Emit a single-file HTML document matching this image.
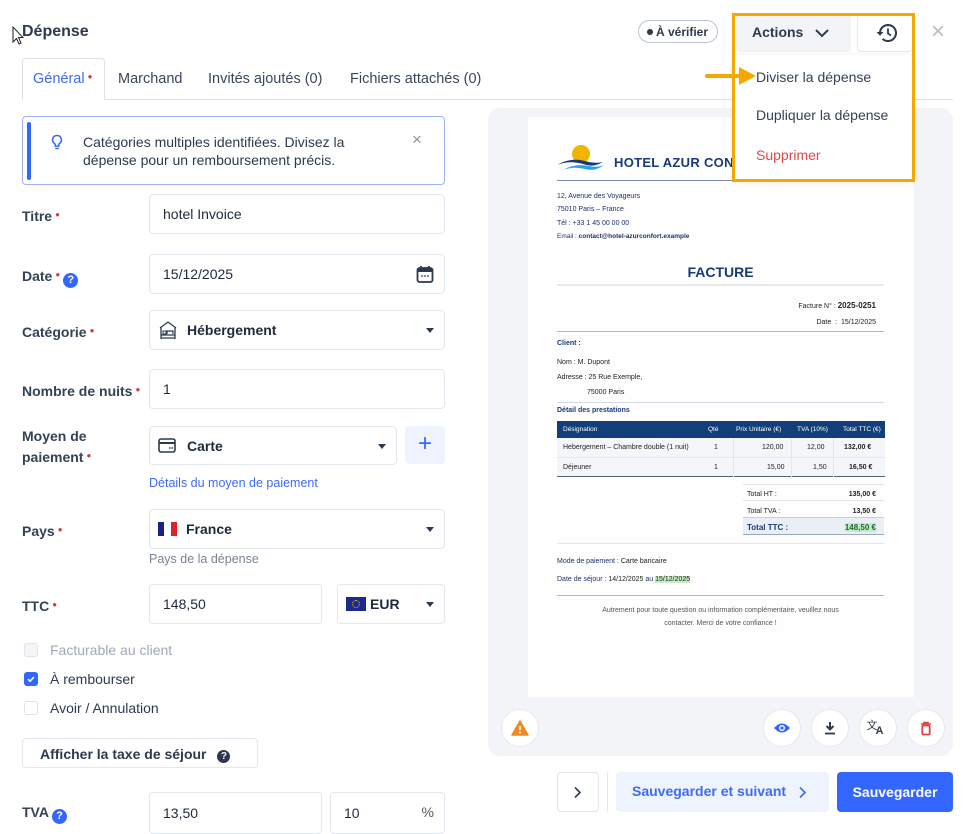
<!DOCTYPE html>
<html><head><meta charset="utf-8"><style>
*{box-sizing:border-box;margin:0;padding:0}
body{width:969px;height:831px;overflow:hidden;background:#fff;font-family:"Liberation Sans",sans-serif;color:#2d3a4e;position:relative}
.a{position:absolute}
.lbl{position:absolute;left:22px;font-size:14px;font-weight:bold;color:#344256;line-height:17px}
.req{color:#d63b3b;font-size:8px;vertical-align:4px;margin-left:3px}
.q{display:inline-block;width:15px;height:15px;border-radius:50%;background:#3366ff;color:#fff;font-size:11px;text-align:center;line-height:15px;margin-left:3px;vertical-align:-2px}
.inp{position:absolute;border:1px solid #e2e6ee;border-radius:4px;background:#fff;font-size:14px;color:#1e293b;padding-left:13px;display:flex;align-items:center}
.caret{position:absolute;right:10px;top:50%;margin-top:-2px;width:0;height:0;border-left:4px solid transparent;border-right:4px solid transparent;border-top:5px solid #2d3a4e}
.doc{font-family:"Liberation Sans",sans-serif;color:#222}
.d8{font-size:7px}
.hl{position:absolute;left:557px;width:327px;height:1px;background:#c9d0dc}
.circ{position:absolute;width:38px;height:38px;border-radius:50%;background:#fff;border:1px solid #e6e9f0;display:flex;align-items:center;justify-content:center}
.cb{position:absolute;left:24px;width:14px;height:14px;border:1px solid #dfe3ea;border-radius:3px;background:#fff}
.cbt{position:absolute;left:50px;font-size:14px}
.tab{position:absolute;top:71px;font-size:14.5px;color:#3a4658}
</style></head><body>

<svg class="a" style="left:12px;top:26px" width="12" height="20" viewBox="0 0 12 20"><path d="M1 1 L1 16 L4.5 12.5 L7 18 L9 17 L6.5 11.5 L11 11.5 Z" fill="#fff" stroke="#222" stroke-width="1"/></svg>
<div class="a" style="left:22px;top:23px;font-size:16px;font-weight:bold;color:#2d3a4e">Dépense</div>

<div class="a" style="left:22px;top:99px;width:931px;height:1px;background:#dde1e8"></div>
<div class="a" style="left:22px;top:58px;width:83px;height:42px;border:1px solid #dde1e8;border-bottom:none;border-radius:4px 4px 0 0;background:#fff"></div>
<div class="tab" style="left:33px;color:#3d6bf5">Général<span class="req">●</span></div>
<div class="tab" style="left:118px">Marchand</div>
<div class="tab" style="left:208px">Invités ajoutés (0)</div>
<div class="tab" style="left:350px">Fichiers attachés (0)</div>

<div class="a" style="left:22px;top:116px;width:423px;height:69px;border:1px solid #9db2f5;border-radius:4px"></div>
<div class="a" style="left:27px;top:122px;width:4px;height:58px;background:#3366ff;border-radius:2px"></div>
<svg class="a" style="left:51px;top:134px" width="12" height="17" viewBox="0 0 12 17"><path d="M6 1.5a4.3 4.3 0 0 0-2.6 7.8c.6.5.9 1.1.9 1.8v1h3.4v-1c0-.7.3-1.3.9-1.8A4.3 4.3 0 0 0 6 1.5z" fill="none" stroke="#3366ff" stroke-width="1.5"/><path d="M4.3 14.5h3.4" stroke="#3366ff" stroke-width="1.5"/></svg>
<div class="a" style="left:83px;top:133px;font-size:14px;line-height:18px;color:#2d3a4e">Catégories multiples identifiées. Divisez la<br>dépense pour un remboursement précis.</div>
<div class="a" style="left:412px;top:130px;font-size:17px;color:#8a93a3">×</div>

<div class="lbl" style="top:206px">Titre<span class="req">●</span></div>
<div class="inp" style="left:149px;top:194px;width:296px;height:40px">hotel Invoice</div>

<div class="lbl" style="top:266px">Date<span class="req">●</span><span class="q">?</span></div>
<div class="inp" style="left:149px;top:254px;width:296px;height:40px">15/12/2025
<svg class="a" style="right:10px;top:10px" width="18" height="19" viewBox="0 0 18 19"><rect x="1.5" y="3" width="15" height="14" rx="2" fill="none" stroke="#2d3a4e" stroke-width="1.8"/><rect x="1.5" y="3" width="15" height="4" fill="#2d3a4e"/><path d="M5 1v3M13 1v3" stroke="#2d3a4e" stroke-width="1.8"/><circle cx="6" cy="11" r=".9" fill="#2d3a4e"/><circle cx="9" cy="11" r=".9" fill="#2d3a4e"/><circle cx="12" cy="11" r=".9" fill="#2d3a4e"/></svg></div>

<div class="lbl" style="top:322px">Catégorie<span class="req">●</span></div>
<div class="inp" style="left:149px;top:310px;width:296px;height:40px;padding-left:8px">
<svg width="20" height="20" viewBox="0 0 20 20" style="margin-right:9px"><path d="M2 8 L10 2 L18 8" fill="none" stroke="#2d3a4e" stroke-width="1.3"/><path d="M3 7v12M17 7v12M3 15h14M3 18h14" stroke="#2d3a4e" stroke-width="1.3"/><rect x="5" y="11" width="3" height="3" fill="none" stroke="#2d3a4e"/><path d="M9 14v-3h6v3" fill="none" stroke="#2d3a4e" stroke-width="1.2"/></svg><b>Hébergement</b><span class="caret"></span></div>

<div class="lbl" style="top:381px">Nombre de nuits<span class="req">●</span></div>
<div class="inp" style="left:149px;top:369px;width:296px;height:40px">1</div>

<div class="lbl" style="top:427px;line-height:19px">Moyen de<br>paiement<span class="req">●</span></div>
<div class="inp" style="left:149px;top:426px;width:248px;height:39px;padding-left:8px">
<svg width="18" height="15" viewBox="0 0 18 15" style="margin-right:11px"><rect x="1" y="1" width="16" height="13" rx="2" fill="none" stroke="#2d3a4e" stroke-width="1.6"/><path d="M1 5h16" stroke="#2d3a4e" stroke-width="2"/><path d="M11 10h1.5M13.5 10h1.5" stroke="#2d3a4e" stroke-width="1.4"/></svg><b>Carte</b><span class="caret"></span></div>
<div class="a" style="left:405px;top:426px;width:40px;height:38px;background:#eef3fe;border-radius:4px;color:#3366ff;font-size:24px;text-align:center;line-height:36px;font-weight:300">+</div>
<div class="a" style="left:149px;top:476px;font-size:12.5px;color:#3d6bf5">Détails du moyen de paiement</div>

<div class="lbl" style="top:521px">Pays<span class="req">●</span></div>
<div class="inp" style="left:149px;top:509px;width:296px;height:40px;padding-left:8px">
<span style="display:inline-flex;width:19px;height:14px;margin-right:9px"><span style="flex:1;background:#1a237e"></span><span style="flex:1;background:#fff"></span><span style="flex:1;background:#e0202b"></span></span><b>France</b><span class="caret"></span></div>
<div class="a" style="left:149px;top:552px;font-size:12.5px;color:#7a8494">Pays de la dépense</div>

<div class="lbl" style="top:596px">TTC<span class="req">●</span></div>
<div class="inp" style="left:149px;top:584px;width:173px;height:40px">148,50</div>
<div class="inp" style="left:337px;top:584px;width:108px;height:40px;padding-left:8px"><span style="display:inline-block;width:20px;height:14px;background:#1b2a8c;margin-right:4px;position:relative"><span style="position:absolute;left:6px;top:3px;width:8px;height:8px;border:1px dotted #f5c400;border-radius:50%"></span></span><b>EUR</b><span class="caret"></span></div>

<div class="cb" style="top:643px;background:#f3f5f9"></div><div class="cbt" style="top:642px;color:#a0a8b6">Facturable au client</div>
<div class="cb" style="top:672px;background:#3366ff;border-color:#3366ff"><svg width="12" height="12" viewBox="0 0 12 12" style="position:absolute;left:0;top:0"><path d="M3 6.2 5 8.2 9 4" fill="none" stroke="#fff" stroke-width="1.6"/></svg></div><div class="cbt" style="top:671px;color:#2d3a4e">À rembourser</div>
<div class="cb" style="top:701px"></div><div class="cbt" style="top:700px;color:#2d3a4e">Avoir / Annulation</div>

<div class="a" style="left:22px;top:738px;width:236px;height:30px;border:1px solid #e2e6ee;border-radius:4px;font-size:14px;font-weight:bold;color:#2d3a4e;padding:7px 0 0 17px">Afficher la taxe de séjour <span style="display:inline-block;width:13px;height:13px;border-radius:50%;background:#2d3a4e;color:#fff;font-size:10px;text-align:center;line-height:13px;margin-left:7px;vertical-align:0">?</span></div>

<div class="lbl" style="top:804px">TVA<span class="q">?</span></div>
<div class="inp" style="left:149px;top:792px;width:173px;height:42px">13,50</div>
<div class="inp" style="left:330px;top:792px;width:115px;height:42px">10<span style="position:absolute;right:10px;top:11px;color:#555">%</span></div>

<div class="a" style="left:488px;top:108px;width:465px;height:648px;background:#f3f4f8;border-radius:12px"></div>
<div class="a doc" style="left:528px;top:117px;width:386px;height:580px;background:#fefefe"></div>
<svg class="a" style="left:557px;top:143px" width="48" height="30" viewBox="0 0 48 30"><circle cx="24" cy="11" r="9" fill="#f2b400"/><path d="M0 22 Q14 14 28 18 Q38 21 46 19 Q36 25 26 21 Q12 17 0 22Z" fill="#183a7a"/><path d="M6 27 Q18 20 32 23 Q40 25 47 22 Q38 29 28 26 Q16 23 6 27Z" fill="#2aa3e0"/></svg>
<div class="a" style="left:614px;top:155px;font-size:13px;font-weight:bold;color:#183a7a;letter-spacing:.3px">HOTEL AZUR CONFORT</div>
<div class="hl" style="top:180px;background:#7b8aa3"></div>
<div class="a doc d8" style="left:557px;top:190px;line-height:13.4px;color:#1e3266">12, Avenue des Voyageurs<br>75010 Paris – France<br>Tél : +33 1 45 00 00 00<br><span style="font-size:6.5px">Email : <b>contact@hotel-azurconfort.example</b></span></div>
<div class="a" style="left:557px;top:264px;width:327px;text-align:center;font-size:14px;font-weight:bold;color:#183a7a">FACTURE</div>
<div class="hl" style="top:284px;background:#e6eaf0;height:2px"></div>
<div class="a doc d8" style="left:700px;top:298px;width:176px;text-align:right;line-height:16px">Facture N° : <b style="font-size:8px">2025-0251</b><br>Date &nbsp;: &nbsp;15/12/2025</div>
<div class="hl" style="top:331px;background:#b0b8c6"></div>
<div class="a doc d8" style="left:557px;top:340px;font-weight:bold;color:#183a7a">Client :</div>
<div class="a doc d8" style="left:557px;top:355px;line-height:15px">Nom : M. Dupont<br>Adresse : 25 Rue Exemple,<br><span style="margin-left:30px">75000 Paris</span></div>
<div class="hl" style="top:402px;background:#d4dae3"></div>
<div class="a doc d8" style="left:557px;top:407px;font-weight:bold;color:#183a7a">Détail des prestations</div>
<div class="a" style="left:557px;top:421px;width:328px;height:17px;background:#123f7a"></div>
<div class="a doc" style="left:557px;top:421px;width:328px;height:17px;font-size:6.5px;color:#fff;line-height:17px">
<span class="a" style="left:6px">Désignation</span><span class="a" style="left:151px">Qté</span><span class="a" style="left:179px">Prix Unitaire (€)</span><span class="a" style="left:240px">TVA (10%)</span><span class="a" style="left:286px">Total TTC (€)</span></div>
<div class="a" style="left:557px;top:438px;width:328px;height:39px;background:#f4f6f9;border-bottom:1px solid #51627e"></div>
<div class="a" style="left:557px;top:457px;width:328px;height:1px;background:#e3e7ed"></div>
<div class="a" style="left:733px;top:438px;width:1px;height:39px;background:#e3e7ed"></div>
<div class="a" style="left:791px;top:438px;width:1px;height:39px;background:#e3e7ed"></div>
<div class="a" style="left:833px;top:438px;width:1px;height:39px;background:#e3e7ed"></div>
<div class="a doc" style="left:557px;top:438px;width:328px;font-size:7px;line-height:20px">
<span class="a" style="left:6px">Hebergement – Chambre double (1 nuit)</span><span class="a" style="left:157px">1</span><span class="a" style="left:205px">120,00</span><span class="a" style="left:250px">12,00</span><span class="a" style="left:287px;font-weight:bold">132,00 €</span>
<span class="a" style="left:6px;top:20px">Déjeuner</span><span class="a" style="left:157px;top:20px">1</span><span class="a" style="left:210px;top:20px">15,00</span><span class="a" style="left:256px;top:20px">1,50</span><span class="a" style="left:292px;top:20px;font-weight:bold">16,50 €</span></div>
<div class="a" style="left:743px;top:484px;width:141px;height:1px;background:#e3e7ed"></div>
<div class="a" style="left:743px;top:500px;width:141px;height:1px;background:#e3e7ed"></div>
<div class="a" style="left:743px;top:517px;width:141px;height:18px;background:#eaeff6;border-top:1px solid #c4cfdf;border-bottom:1px solid #9aa9c2"></div>
<div class="a doc" style="left:747px;top:487px;font-size:7px;line-height:16.5px">Total HT :<br>Total TVA :<br><b style="color:#183a7a;font-size:8px">Total TTC :</b></div>
<div class="a doc" style="left:800px;top:487px;width:76px;text-align:right;font-size:7px;line-height:16.5px;font-weight:bold">135,00 €<br>13,50 €<br><span style="background:#c5ecc5;color:#1d6b3a;font-size:8px">148,50 €</span></div>
<div class="hl" style="top:543px;background:#e3e7ed"></div>
<div class="a doc d8" style="left:557px;top:553px;line-height:18px"><span style="color:#1e3266">Mode de paiement :</span> Carte bancaire<br><span style="color:#1e3266">Date de séjour :</span> 14/12/2025 <span style="color:#1e3266">au</span> <span style="background:#c5ecc5">15/12/2025</span></div>
<div class="hl" style="top:595px;background:#b0b8c6"></div>
<div class="a doc d8" style="left:557px;top:604px;width:327px;text-align:center;line-height:13px;color:#555">Autrement pour toute question ou information complémentaire, veuillez nous<br>contacter. Merci de votre confiance !</div>

<div class="circ" style="left:501px;top:709px"><svg width="18" height="16" viewBox="0 0 18 16"><path d="M9 1 L17 15 H1 Z" fill="#f08a24" stroke="#f08a24" stroke-linejoin="round" stroke-width="1.5"/><path d="M9 6v4" stroke="#fff" stroke-width="1.8"/><circle cx="9" cy="12.5" r="1" fill="#fff"/></svg></div>
<div class="circ" style="left:763px;top:709px"><svg width="18" height="12" viewBox="0 0 18 12"><path d="M1 6 Q9 -3 17 6 Q9 15 1 6Z" fill="#3366ff"/><circle cx="9" cy="6" r="3" fill="#fff"/><circle cx="9" cy="6" r="1.6" fill="#3366ff"/></svg></div>
<div class="circ" style="left:811px;top:709px"><svg width="12" height="14" viewBox="0 0 12 14"><path d="M6 1v7M2.5 5 6 8.5 9.5 5" fill="none" stroke="#2d3a4e" stroke-width="2"/><path d="M1 12.5h10" stroke="#2d3a4e" stroke-width="1.8"/></svg></div>
<div class="circ" style="left:859px;top:709px;font-size:11px;color:#2d3a4e"><span style="position:relative;top:-3px;left:-2px">文</span><b style="position:relative;top:3px;left:-4px;font-size:11px">A</b></div>
<div class="circ" style="left:907px;top:709px"><svg width="12" height="15" viewBox="0 0 12 15"><path d="M1 3h10M4 3V1.5h4V3" fill="none" stroke="#e04545" stroke-width="1.6"/><rect x="2.3" y="4.5" width="7.4" height="9" rx="1" fill="none" stroke="#e04545" stroke-width="1.8"/></svg></div>

<div class="a" style="left:557px;top:772px;width:42px;height:40px;border:1px solid #e2e6ee;border-radius:4px"><svg style="position:absolute;left:15px;top:13px" width="9" height="13" viewBox="0 0 9 13"><path d="M2 1.5 7 6.5 2 11.5" fill="none" stroke="#2d3a4e" stroke-width="1.6"/></svg></div>
<div class="a" style="left:607px;top:772px;width:1px;height:40px;background:#e2e6ee"></div>
<div class="a" style="left:616px;top:772px;width:213px;height:40px;background:#eef3fe;border-radius:4px;color:#3d6bf5;font-size:14px;font-weight:bold;padding:11px 0 0 16px">Sauvegarder et suivant<svg style="position:absolute;left:182px;top:14px" width="9" height="13" viewBox="0 0 9 13"><path d="M2 1.5 7 6.5 2 11.5" fill="none" stroke="#3d6bf5" stroke-width="1.6"/></svg></div>
<div class="a" style="left:837px;top:772px;width:116px;height:40px;background:#3366ff;border-radius:4px;color:#fff;font-size:14px;font-weight:bold;text-align:center;line-height:40px">Sauvegarder</div>

<div class="a" style="left:638px;top:20px;width:80px;height:23px;border:1px solid #bcc4d2;border-radius:12px;font-size:12px;font-weight:bold;color:#2d3a4e;padding:4px 0 0 8px"><span style="display:inline-block;width:6px;height:6px;border-radius:50%;background:#2d3a4e;margin-right:3px;vertical-align:1px"></span>À vérifier</div>
<div class="a" style="left:736px;top:14px;width:115px;height:38px;background:#f3f4f8;border-radius:4px;font-size:14px;font-weight:bold;color:#2d3a4e;padding:10px 0 0 16px">Actions<svg style="position:absolute;left:78px;top:14px" width="16" height="10" viewBox="0 0 16 10"><path d="M2 2 8 8 14 2" fill="none" stroke="#2d3a4e" stroke-width="2"/></svg></div>
<div class="a" style="left:857px;top:14px;width:56px;height:38px;background:#fff;border:1px solid #e6e9f0;border-radius:4px"><svg style="position:absolute;left:17px;top:8px" width="22" height="20" viewBox="0 0 22 20"><path d="M5 10a8 8 0 1 1 2.5 5.8" fill="none" stroke="#2d3a4e" stroke-width="2"/><path d="M1.5 9 5 12.8 8.5 9Z" fill="#2d3a4e"/><path d="M13 5.5v5l3 2" fill="none" stroke="#2d3a4e" stroke-width="1.8"/></svg></div>
<div class="a" style="left:931px;top:18px;font-size:24px;color:#b8bec8;font-weight:300">×</div>

<div class="a" style="left:735px;top:55px;width:178px;height:124px;background:#fff;border-radius:4px;box-shadow:0 2px 8px rgba(0,0,0,.12)"></div>
<div class="a" style="left:756px;top:69px;font-size:14px;color:#344256">Diviser la dépense</div>
<div class="a" style="left:756px;top:107px;font-size:14px;color:#344256">Dupliquer la dépense</div>
<div class="a" style="left:756px;top:147px;font-size:14px;color:#e04848">Supprimer</div>
<div class="a" style="left:732px;top:13px;width:183px;height:169px;border:3px solid #f5a800"></div>
<div class="a" style="left:705px;top:74px;width:36px;height:4px;background:#f5a800;border-radius:2px"></div>
<svg class="a" style="left:739px;top:67px" width="17" height="18" viewBox="0 0 17 18"><path d="M0 0 L17 9 L0 18 Z" fill="#f5a800"/></svg>
</body></html>
